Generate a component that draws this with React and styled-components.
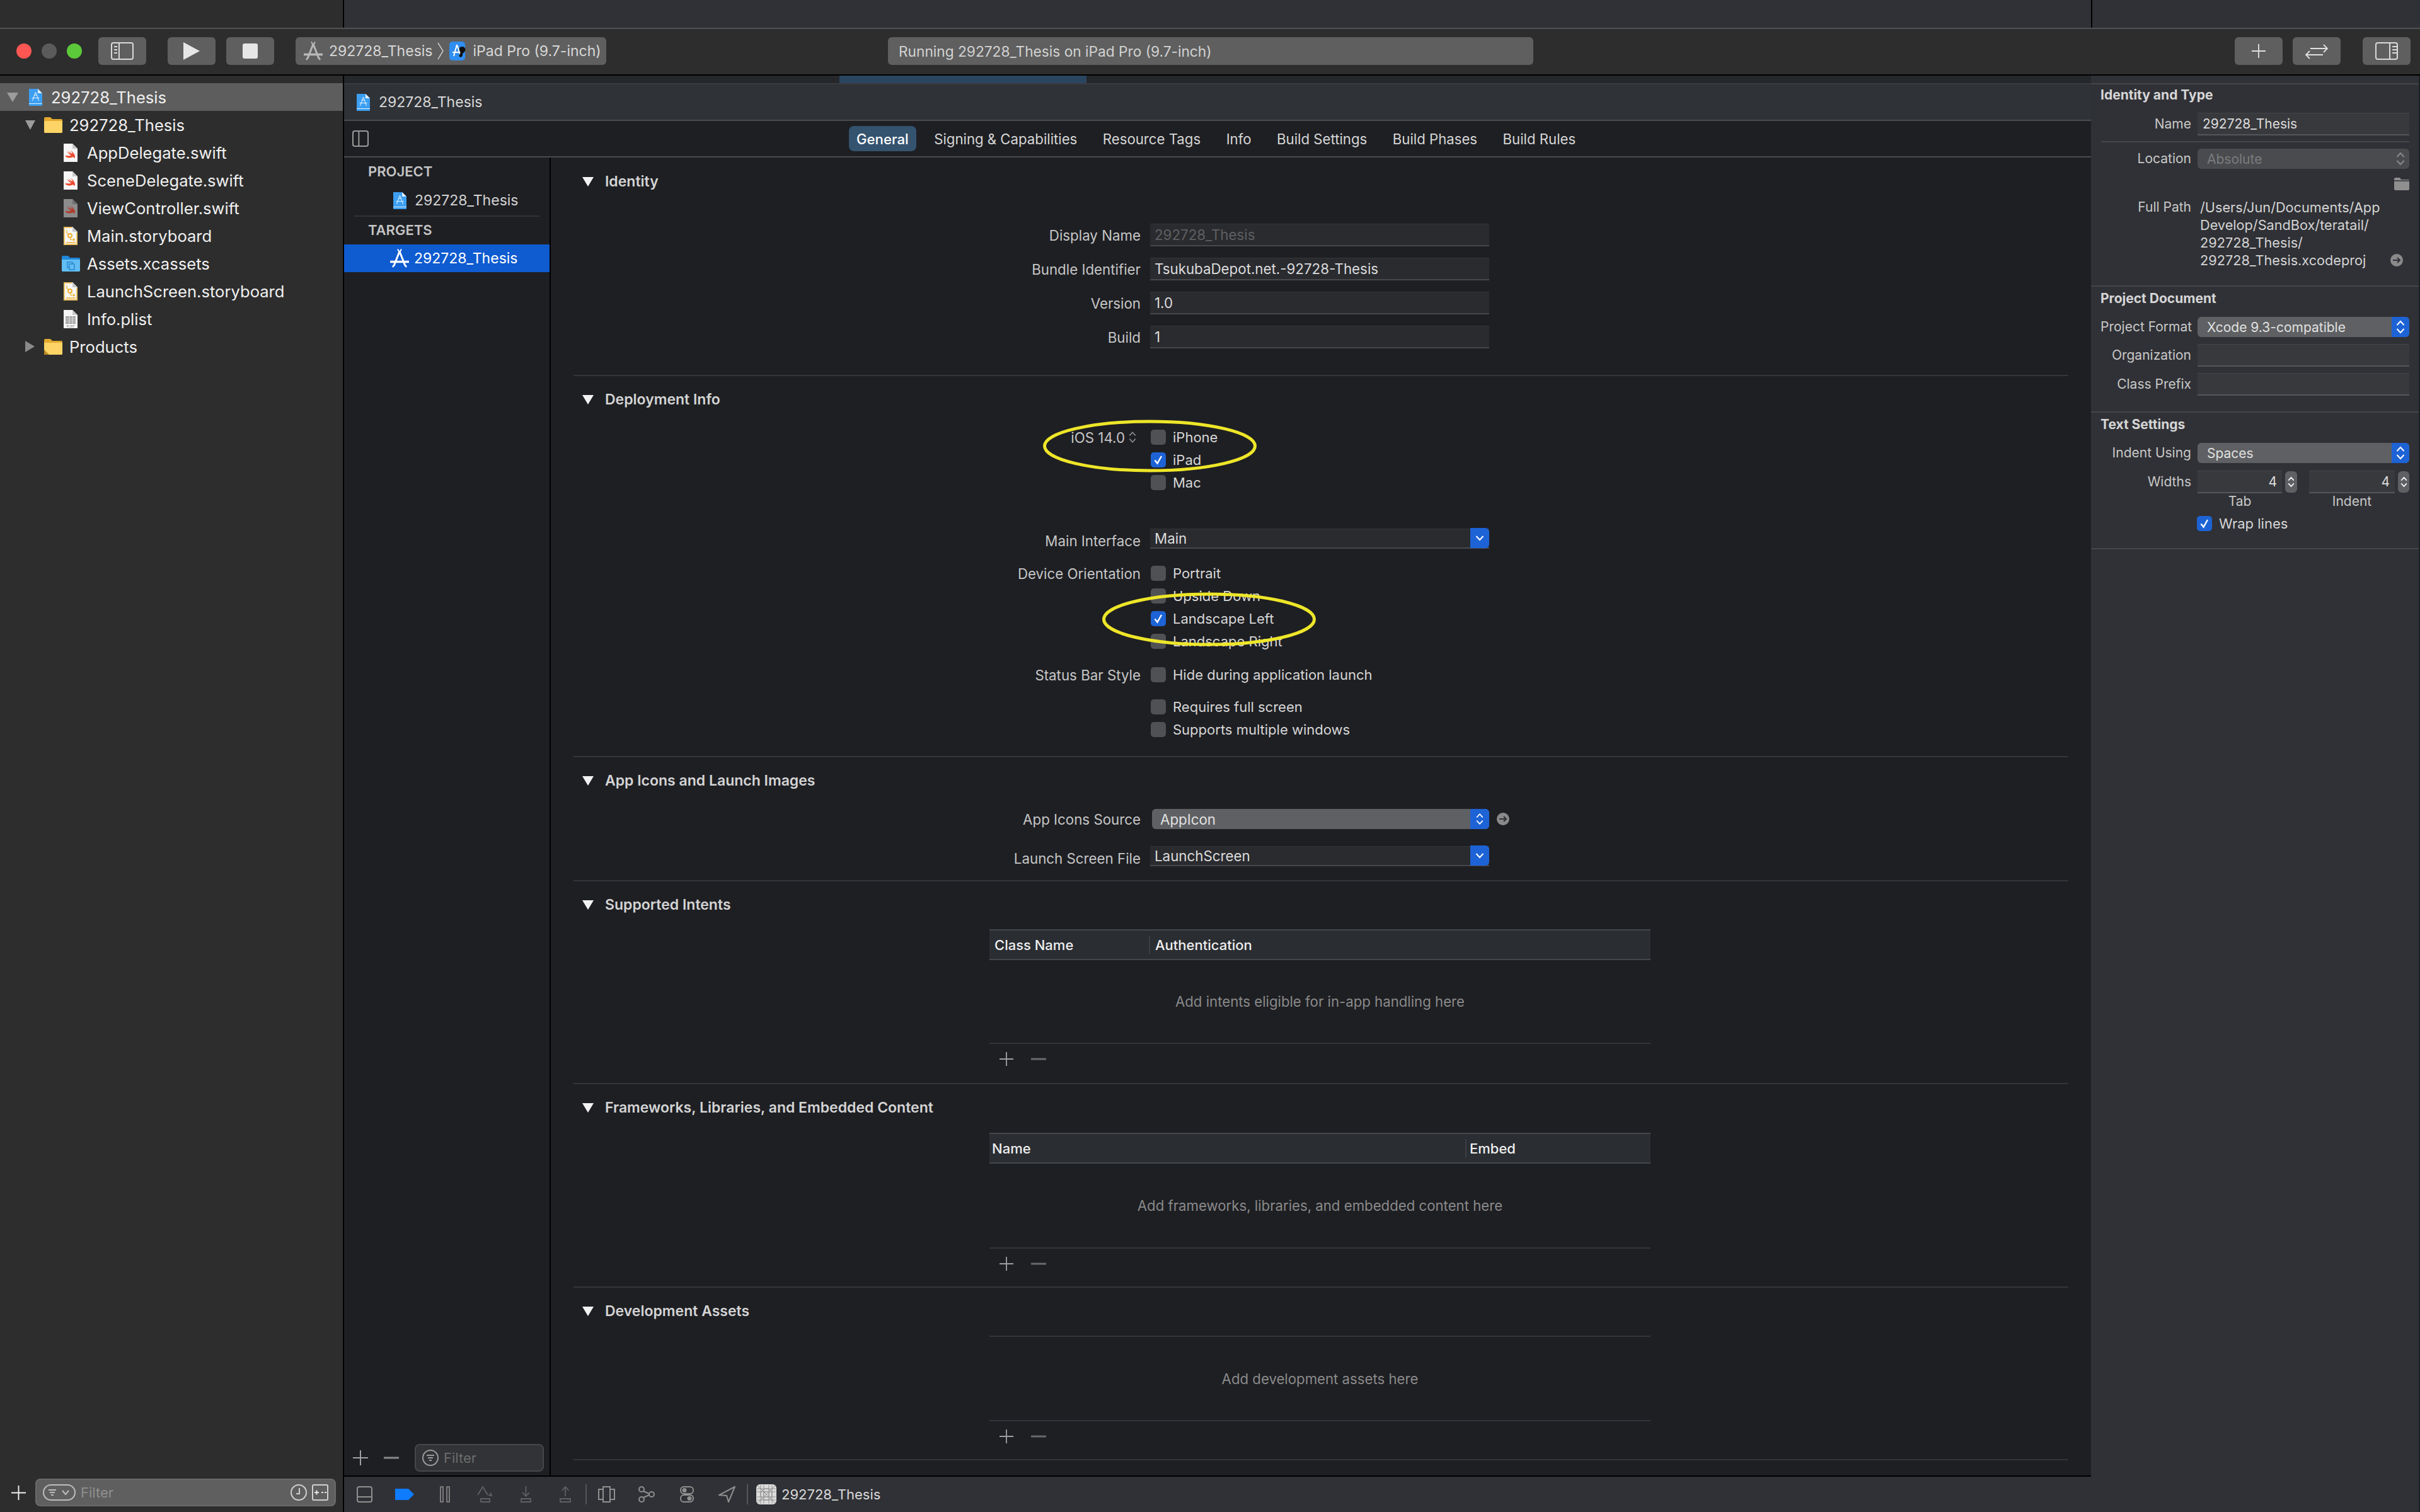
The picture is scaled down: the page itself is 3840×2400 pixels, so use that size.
import React from "react";
import styled, { createGlobalStyle } from "styled-components";

const GlobalStyle = createGlobalStyle`
  html, body {
    margin: 0;
    padding: 0;
    background: #1e1f23;
  }
  * {
    box-sizing: border-box;
  }
`;

const Window = styled.div`
  width: 3840px;
  height: 2400px;
  display: flex;
  flex-direction: column;
  overflow: hidden;
  font-family: Inter, "Liberation Sans", sans-serif;
  color: #dcdcdc;
  font-size: 22.3px;
`;

/* top strip + toolbar */
const TopStrip = styled.div`
  height: 46px;
  display: flex;
  background: #303136;
  border-bottom: 2px solid #515256;
`;

const StripLeft = styled.div`
  width: 546px;
  background: #2d2d2d;
  border-right: 2px solid #000;
`;

const StripRight = styled.div`
  margin-left: auto;
  width: 522px;
  border-left: 2px solid #000;
`;

const Toolbar = styled.div`
  height: 74px;
  display: flex;
  align-items: center;
  padding: 0 15px 2px 26px;
  background: #2d2d2d;
  border-bottom: 2px solid #000;
`;

const Lights = styled.div`
  display: flex;
  gap: 16px;
`;

const Light = styled.span`
  width: 24px;
  height: 24px;
  border-radius: 50%;
  background: ${(p) => p.$color};
`;

const ToolButton = styled.div`
  width: ${(p) => p.$w || 76}px;
  height: 44px;
  margin-left: ${(p) => p.$ml || 0}px;
  display: flex;
  align-items: center;
  justify-content: center;
  background: #5f5f5f;
  border-radius: 6px;
  color: #e4e4e4;
`;

const Scheme = styled.div`
  width: 493px;
  height: 44px;
  margin-left: 34px;
  display: flex;
  align-items: center;
  padding-left: 12px;
  background: #5f5f5f;
  border-radius: 6px;
  font-size: 23px;
  color: #d8d8d8;
  white-space: nowrap;
`;

const SchemeName = styled.span`
  margin-left: 9px;
`;

const SchemeArrow = styled.svg`
  margin: 0 9px 0 8px;
  flex: none;
`;

const DeviceName = styled.span`
  margin-left: 9px;
`;

const Status = styled.div`
  width: 1024px;
  height: 44px;
  margin-left: 447px;
  display: flex;
  align-items: center;
  padding-left: 17px;
  background: #5f5f5f;
  border-radius: 6px;
  color: #d2d2d2;
  font-size: 22.7px;
`;

const ToolbarRight = styled.div`
  margin-left: auto;
  display: flex;
`;

/* main area */
const Main = styled.div`
  flex: 1;
  display: flex;
  min-height: 0;
`;

const Navigator = styled.aside`
  width: 546px;
  display: flex;
  flex-direction: column;
  padding-top: 12px;
  background: #2d2d2d;
  border-right: 2px solid #000;
`;

const NavRow = styled.div`
  height: 44px;
  display: flex;
  align-items: center;
  padding-left: ${(p) => p.$pad}px;
  background: ${(p) => (p.$selected ? "#5d5d5d" : "transparent")};
  color: #f0f0f0;
  font-size: 25.6px;
`;

const TriSlot = styled.span`
  width: ${(p) => p.$w}px;
  margin-right: ${(p) => p.$mr}px;
  display: flex;
`;

const IconSlot = styled.span`
  width: ${(p) => p.$w}px;
  margin-right: ${(p) => p.$mr}px;
  display: flex;
  justify-content: center;
`;

const TriDown = styled.span`
  width: 0;
  height: 0;
  border-left: ${(p) => p.$size || 9}px solid transparent;
  border-right: ${(p) => p.$size || 9}px solid transparent;
  border-top: 15px solid ${(p) => p.$color || "#9c9c9c"};
`;

const TriRight = styled.span`
  width: 0;
  height: 0;
  border-top: 9px solid transparent;
  border-bottom: 9px solid transparent;
  border-left: 15px solid #8a8a8a;
`;

const NavBottom = styled.div`
  margin-top: auto;
  height: 50px;
  margin-bottom: 6px;
  display: flex;
  align-items: center;
  padding-left: 18px;
  gap: 15px;
`;

const FilterBox = styled.div`
  width: ${(p) => p.$w}px;
  height: 44px;
  display: flex;
  align-items: center;
  padding: 0 10px;
  gap: 8px;
  background: ${(p) => p.$bg};
  border: 2px solid ${(p) => p.$line};
  border-radius: 8px;
  color: ${(p) => p.$color};
  font-size: 22px;
`;

const FilterEnd = styled.div`
  margin-left: auto;
  display: flex;
  gap: 8px;
`;

const Center = styled.div`
  width: 2772px;
  display: flex;
  flex-direction: column;
`;

const Progress = styled.div`
  height: 14px;
  background: #25272b;
  border-bottom: 2px solid #3a3b40;
`;

const ProgressFill = styled.div`
  width: 392px;
  height: 12px;
  margin-left: 786px;
  background: #2a4560;
`;

const FileBar = styled.div`
  height: 58px;
  display: flex;
  align-items: center;
  gap: 13px;
  padding-left: 19px;
  background: #2f3237;
  border-bottom: 2px solid #4a4b4e;
  color: #d8d8d8;
  font-size: 23px;
`;

const TabBar = styled.div`
  height: 58px;
  display: flex;
  align-items: center;
  padding-left: 13px;
  background: #1e1f23;
  border-bottom: 2px solid #4a4b4e;
`;

const Tabs = styled.nav`
  display: flex;
  gap: 16.5px;
  margin-left: 762px;
`;

const Tab = styled.span`
  height: 40px;
  display: flex;
  align-items: center;
  padding: 0 12px;
  border-radius: 8px;
  background: ${(p) => (p.$active ? "#34536f" : "transparent")};
  color: ${(p) => (p.$active ? "#fff" : "#d6d6d6")};
  font-weight: ${(p) => (p.$active ? 500 : 400)};
  font-size: 22.2px;
  white-space: nowrap;
`;

const Body = styled.div`
  flex: 1;
  display: flex;
  min-height: 0;
`;

const Targets = styled.div`
  width: 328px;
  display: flex;
  flex-direction: column;
  background: #1e1f23;
  border-right: 2px solid #000;
  font-size: 23px;
`;

const GroupLabel = styled.div`
  height: 44px;
  padding: 0 0 ${(p) => p.$pb || 0}px 38px;
  display: flex;
  align-items: center;
  font-weight: 600;
  font-size: 22px;
  color: #c4c4c4;
`;

const TargetRow = styled.div`
  height: 44px;
  margin-top: ${(p) => p.$mt || 0}px;
  display: flex;
  align-items: center;
  padding-left: ${(p) => p.$pad}px;
  gap: ${(p) => p.$gap}px;
  background: ${(p) => (p.$selected ? "#0f5bd0" : "transparent")};
  color: ${(p) => (p.$selected ? "#fff" : "#d4d4d4")};
`;

const TargetRule = styled.div`
  height: 2px;
  margin: 2px 16px 0;
  background: #333438;
`;

const TargetBottom = styled.div`
  margin-top: auto;
  margin-bottom: 6px;
  display: flex;
  align-items: center;
  padding-left: 14px;
  gap: 25px;
`;

/* editor */
const Editor = styled.div`
  position: relative;
  width: 2444px;
  background: #1e1f23;
  overflow: hidden;
`;

const Section = styled.section`
  margin: 0 36px;
  padding: ${(p) => p.$pt || 15}px 0 ${(p) => p.$pb}px;
  border-bottom: 2px solid #34353a;
`;

const SectionHeader = styled.h3`
  height: 44px;
  margin: 0;
  display: flex;
  align-items: center;
  gap: 18px;
  padding-left: 14px;
  font-size: 23px;
  font-weight: 600;
  color: #d4d4d4;
`;

const FormBlock = styled.div`
  margin-top: 36px;
`;

const Row = styled.div`
  height: ${(p) => p.$h || 36}px;
  margin-top: ${(p) => p.$mt || 0}px;
  display: grid;
  grid-template-columns: 900px 538px;
  column-gap: 15px;
  align-items: center;
`;

const Label = styled.label`
  display: flex;
  align-items: center;
  justify-content: flex-end;
  gap: 6px;
  padding-right: ${(p) => p.$pr || 0}px;
  margin-top: ${(p) => p.$mt || 0}px;
  color: #c6c6c6;
`;

const Field = styled.div`
  height: 36px;
  display: flex;
  align-items: center;
  padding-left: 7px;
  background: #2a2b2f;
  border-top: 1px solid #333438;
  border-bottom: 2px solid #47484c;
  color: ${(p) => (p.$dim ? "#5e5f62" : "#dcdcdc")};
`;

const Combo = styled.div`
  height: 32px;
  display: flex;
  align-items: center;
  justify-content: space-between;
  padding-left: 7px;
  margin-top: -1px;
  background: #2a2b2f;
  border-top: 1px solid #333438;
  border-bottom: 2px solid #47484c;
  color: #dcdcdc;
`;

const Check = styled.label`
  display: flex;
  align-items: center;
  gap: 11px;
  margin-left: ${(p) => p.$ml ?? 1}px;
  color: #d6d6d6;
  font-size: 22px;
`;

const Box = styled.span`
  width: 24px;
  height: 24px;
  display: flex;
  align-items: center;
  justify-content: center;
  border-radius: 5px;
  background: ${(p) => (p.$on ? "#1d63d6" : "#505154")};
`;

const BlueEnd = styled.span`
  width: ${(p) => p.$w || 30}px;
  height: 32px;
  flex: none;
  display: flex;
  align-items: center;
  justify-content: center;
  background: #1d63d6;
  border-radius: 0 6px 6px 0;
  margin-bottom: ${(p) => p.$mb || 0}px;
`;

const GhostEnd = styled.span`
  width: 28px;
  display: flex;
  justify-content: center;
`;

const PopupRow = styled.div`
  display: flex;
  align-items: center;
  gap: 12px;
`;

const Popup = styled.div`
  height: 32px;
  width: ${(p) => p.$w || "100%"};
  flex: none;
  margin-left: ${(p) => p.$ml || 0}px;
  display: flex;
  align-items: center;
  justify-content: space-between;
  padding-left: ${(p) => p.$pad || 13}px;
  background: ${(p) => (p.$off ? "#4a4b4e" : "#5f6063")};
  border-radius: 6px;
  color: ${(p) => (p.$off ? "#7b7c7e" : "#e0e0e0")};
`;

const GoButton = styled.span`
  width: 20px;
  height: 20px;
  flex: none;
  margin-left: ${(p) => p.$ml || "auto"};
  margin-right: ${(p) => p.$mr || 0}px;
  display: flex;
  align-items: center;
  justify-content: center;
  border-radius: 50%;
  background: #8a8a8a;
`;

const Table = styled.div`
  width: 1049px;
  margin: ${(p) => p.$mt}px 0 0 660px;
`;

const TableHead = styled.div`
  height: 49px;
  display: grid;
  grid-template-columns: ${(p) => p.$first}px 1fr;
  align-items: center;
  background: #2a2d32;
  border-top: 2px solid #45474b;
  border-bottom: 2px solid #45474b;
  color: #eee;
  font-size: 22px;
  font-weight: 500;
`;

const HeadCell = styled.div`
  height: 30px;
  display: flex;
  align-items: center;
  padding-left: ${(p) => p.$pad}px;
  border-left: ${(p) => (p.$divider ? "2px solid #3c3e42" : "0")};
`;

const EmptyHint = styled.div`
  height: ${(p) => p.$h || 131}px;
  display: flex;
  align-items: center;
  justify-content: center;
  color: #8a8a8a;
  font-size: 22.2px;
`;

const TableRule = styled.div`
  height: 2px;
  background: #34353a;
`;

const TableFoot = styled.div`
  height: 48px;
  display: flex;
  align-items: center;
  gap: 28px;
  padding-left: 16px;
`;

const Annotation = styled.svg`
  position: absolute;
  left: ${(p) => p.$left}px;
  top: ${(p) => p.$top}px;
`;

/* debug bar */
const DebugBar = styled.div`
  height: 58px;
  display: flex;
  align-items: center;
  padding: 0 0 0 20px;
  background: #303136;
  border-top: 2px solid #000;
  color: #d8d8d8;
`;

const DebugIcon = styled.svg`
  margin-left: ${(p) => p.$ml || 0}px;
  flex: none;
`;

const DebugSep = styled.span`
  width: 2px;
  height: 32px;
  margin-left: ${(p) => p.$ml}px;
  background: #55565a;
`;

const DebugName = styled.span`
  margin-left: 8px;
  font-size: 22px;
`;

/* inspector */
const Inspector = styled.aside`
  width: 520px;
  padding-top: 12px;
  background: #303136;
  font-size: 21px;
  color: #d4d4d4;
`;

const InspSection = styled.section`
  padding: ${(p) => (p.$first ? 1 : 3)}px 15px ${(p) => p.$pb}px 15px;
  border-top: ${(p) => (p.$first ? "2px solid #45464b" : "0")};
  border-bottom: 2px solid #45464b;
`;

const InspTitle = styled.h4`
  height: 30px;
  margin: 0;
  display: flex;
  align-items: center;
  font-size: 21px;
  font-weight: 700;
  color: #d6d6d6;
`;

const InspRow = styled.div`
  min-height: ${(p) => p.$h || 32}px;
  margin-top: ${(p) => p.$mt || 0}px;
  display: grid;
  grid-template-columns: 144px 336px;
  column-gap: 10px;
  align-items: ${(p) => p.$align || "center"};
`;

const InspLabel = styled.label`
  text-align: right;
  color: #c8c8c8;
  line-height: 28px;
  white-space: nowrap;
`;

const InspField = styled.div`
  height: ${(p) => p.$h || 36}px;
  width: ${(p) => p.$w || "100%"};
  flex: none;
  display: flex;
  align-items: center;
  justify-content: ${(p) => (p.$right ? "flex-end" : "flex-start")};
  padding: 0 8px;
  background: #38393d;
  border-top: 1px solid #45464a;
  border-bottom: 2px solid #55565a;
  color: #dcdcdc;
`;

const InspRule = styled.div`
  height: 2px;
  margin: 9px 0 0 1px;
  background: #45464b;
`;

const FolderRow = styled.div`
  height: 20px;
  margin-top: 14px;
  display: flex;
  justify-content: flex-end;
`;

const PathBlock = styled.div`
  padding-left: 4px;
  font-size: 21.7px;
`;

const PathLine = styled.div`
  height: 28px;
  display: flex;
  align-items: center;
  white-space: nowrap;
`;

const WidthsGrid = styled.div`
  display: flex;
  gap: 19px;
`;

const WidthGroup = styled.div`
  display: flex;
  align-items: center;
  gap: 5px;
`;

const Stepper = styled.span`
  width: ${(p) => p.$w}px;
  height: 34px;
  flex: none;
  display: flex;
  align-items: center;
  justify-content: center;
  border-radius: 6px;
  background: #5f6063;
`;

const WidthLabels = styled.div`
  display: grid;
  grid-template-columns: 134px 136px;
  column-gap: 43px;
  margin-left: 154px;
  height: 20px;
  text-align: center;
  align-items: center;
  color: #c8c8c8;
`;

const WrapRow = styled.div`
  margin: 15px 0 0 153px;
`;

const SvgBlock = styled.svg`
  display: block;
  flex: none;
`;

/* drawn icons */
const XcodeDoc = () => (
  <SvgBlock width="23" height="29" viewBox="0 0 23 29">
    <path d="M1 1h14l7 7v20H1z" fill="#3c9ff2" />
    <path d="M15 1l7 7h-7z" fill="#e2f1ff" />
    <path d="M1 24h21v1H1z" fill="#dff0ff" />
    <path d="M11.5 6L6.5 20M11.5 6l5 14M5.5 15.5h12M9 11h5" stroke="#e6f4ff" strokeWidth="1" fill="none" />
  </SvgBlock>
);

const Folder = ({ back = "#e3a92f", front = "#fdd465", corner, children }) => (
  <SvgBlock width="29" height="26" viewBox="0 0 29 26">
    <path d="M0 3a2 2 0 012-2h8l3 3h14a2 2 0 012 2v18a2 2 0 01-2 2H2a2 2 0 01-2-2z" fill={back} />
    <path d="M0 7h29v17a2 2 0 01-2 2H2a2 2 0 01-2-2z" fill={front} />
    {corner && <path d="M0 18l8 8H2a2 2 0 01-2-2z" fill="#b98a22" />}
    {children}
  </SvgBlock>
);

const AssetsFolder = () => (
  <Folder back="#1f86d8" front="#62bdf3">
    <rect x="9" y="11" width="8" height="9" fill="none" stroke="#2a86cf" strokeWidth="1.4" />
    <rect x="12" y="14" width="8" height="9" fill="#62bdf3" stroke="#2a86cf" strokeWidth="1.4" />
  </Folder>
);

const SwiftDoc = ({ paper = "#f6f6f6", fold = "#c9c9c9", bird = "#ec4a32" }) => (
  <SvgBlock width="22" height="29" viewBox="0 0 22 29">
    <path d="M0 0h14l8 8v21H0z" fill={paper} />
    <path d="M14 0l8 8h-8z" fill={fold} />
    <path
      d="M3 20.5c3.500 2.500 8 2.800 11 .8 1.500.2 2.800 1 3.600 2 .8-2.500.2-4.800-1-6.800-1-2-3-4.200-5.600-6 1.600 1.900 2.800 4 3.200 5.800-2.500-1.500-5-3.500-7-5.600 1.300 2 3 3.900 4.800 5.500-2.500-1.100-5-2.700-7-4.300 1.900 2.900 4.400 5.300 7 6.800-2.900 1-6 .8-9-.2z"
      fill={bird}
    />
  </SvgBlock>
);

const StoryboardDoc = () => (
  <SvgBlock width="22" height="29" viewBox="0 0 22 29">
    <path d="M0 0h14l8 8v21H0z" fill="#f6f6f6" />
    <path d="M14 0l8 8h-8z" fill="#c9c9c9" />
    <path d="M1 28V1h12.500M21 8.500V28H1M4 25h15" fill="none" stroke="#eeb12c" strokeWidth="1.4" />
    <circle cx="10" cy="14" r="3" fill="none" stroke="#eeb12c" strokeWidth="2" />
    <path d="M5 5v5l3 2M11 17.500v3h6M15 18.500l2.500 2-2.500 2" fill="none" stroke="#eeb12c" strokeWidth="1.200" />
  </SvgBlock>
);

const PlistDoc = () => (
  <SvgBlock width="22" height="29" viewBox="0 0 22 29">
    <path d="M0 0h14l8 8v21H0z" fill="#f6f6f6" />
    <path d="M14 0l8 8h-8z" fill="#c9c9c9" />
    <path d="M3 10h16v12H3z" fill="#9b9b9b" />
    <path d="M3 13h16M3 16h16M3 19h16M9 10v12M14 10v12" stroke="#f0f0f0" strokeWidth="0.8" />
    <text x="11" y="27.500" fontSize="4.500" textAnchor="middle" fill="#777" fontFamily="Inter, sans-serif">
      PLIST
    </text>
  </SvgBlock>
);

const AppGlyph = ({ size = 32, color = "#fff" }) => (
  <SvgBlock width={size} height={size} viewBox="0 0 32 32">
    <path d="M13 1.500l3 5 3-5" fill="none" stroke={color} strokeWidth="2" />
    <path d="M16 5L7 28M16 5l9 23" fill="none" stroke={color} strokeWidth="3" />
    <path d="M1 21.500h30" stroke={color} strokeWidth="3.500" />
    <path d="M5 30l2-3M27 30l-2-3" stroke={color} strokeWidth="2.500" />
  </SvgBlock>
);

const DeviceIcon = () => (
  <SvgBlock width="28" height="30" viewBox="0 0 28 30">
    <rect x="0" y="0" width="25" height="30" rx="5" fill="#2f8ef0" />
    <path d="M12 5L7 23M12 5l6 18M5 17h15" stroke="#fff" strokeWidth="2" fill="none" />
    <path d="M17 9c5-3 10 1 8 6-1 2-4 3-4 6 0 3-3 5-5 3-2-3 3-5 1-8-1-2-2-5 0-7z" fill="#101010" />
  </SvgBlock>
);

const GridIcon = () => (
  <DebugIcon width="32" height="32" viewBox="0 0 32 32" $ml={13}>
    <rect width="32" height="32" rx="6" fill="#dcdcdc" />
    <path
      d="M1 7h30M1 12h30M1 20h30M1 25h30M7 1v30M12 1v30M20 1v30M25 1v30M2 2l28 28M30 2L2 30"
      stroke="#8a8a8a"
      strokeWidth="0.9"
    />
    <circle cx="16" cy="16" r="9" fill="none" stroke="#8a8a8a" strokeWidth="0.9" />
    <circle cx="16" cy="16" r="4.500" fill="none" stroke="#8a8a8a" strokeWidth="0.9" />
  </DebugIcon>
);

const SidebarIcon = ({ w = 26, h = 26, split = 0.36, lines, right, stroke = "#9a9a9a" }) => {
  const x = right ? w * (1 - split) : w * split;
  return (
    <SvgBlock width={w} height={h} viewBox={`0 0 ${w} ${h}`}>
      <rect x="1" y="1" width={w - 2} height={h - 2} rx="3" fill="none" stroke={stroke} strokeWidth="2" />
      <path d={`M${x} 1v${h - 2}`} stroke={stroke} strokeWidth="2" />
      {lines && (
        <path
          d={right ? `M${x + 4} 7h7M${x + 4} 12h7M${x + 4} 17h7` : "M5 7h5M5 12h5M5 17h5"}
          stroke={stroke}
          strokeWidth="2"
        />
      )}
    </SvgBlock>
  );
};

const Plus = ({ size = 24, color = "#a0a0a0", width = 2 }) => (
  <SvgBlock width={size} height={size} viewBox="0 0 24 24">
    <path d="M12 0v24M0 12h24" stroke={color} strokeWidth={width} />
  </SvgBlock>
);

const Minus = ({ color = "#6a6a6a" }) => (
  <SvgBlock width="24" height="24" viewBox="0 0 24 24">
    <path d="M0 12h24" stroke={color} strokeWidth="3" />
  </SvgBlock>
);

const UpDown = ({ color = "#fff", w = 14, h = 22 }) => (
  <SvgBlock width={w} height={h} viewBox="0 0 14 22">
    <path d="M1.500 8L7 2l5.500 6M1.500 14L7 20l5.500-6" fill="none" stroke={color} strokeWidth="2" />
  </SvgBlock>
);

const ChevronDown = () => (
  <SvgBlock width="14" height="10" viewBox="0 0 14 10">
    <path d="M1.500 2L7 8l5.500-6" fill="none" stroke="#fff" strokeWidth="2" />
  </SvgBlock>
);

const Tick = () => (
  <SvgBlock width="16" height="16" viewBox="0 0 16 16">
    <path d="M2.500 8.500l4 5L13 2" fill="none" stroke="#fff" strokeWidth="2.400" />
  </SvgBlock>
);

const GoArrow = () => (
  <SvgBlock width="14" height="12" viewBox="0 0 14 12">
    <path d="M1 6h11M8 2l4 4-4 4" fill="none" stroke="#303136" strokeWidth="2" />
  </SvgBlock>
);

const FilterLines = ({ color, r }) => (
  <SvgBlock width={r * 2} height={r * 2} viewBox="0 0 26 26">
    <circle cx="13" cy="13" r="12" fill="none" stroke={color} strokeWidth="2" />
    <path d="M7 9h12M9 13h8M11 17h4" stroke={color} strokeWidth="2" />
  </SvgBlock>
);

const FilterPill = () => (
  <SvgBlock width="52" height="26" viewBox="0 0 52 26">
    <rect x="1" y="1" width="50" height="24" rx="12" fill="none" stroke="#bdbdbd" strokeWidth="2" />
    <path d="M9 9h12M11 13h8M13 17h4" stroke="#bdbdbd" strokeWidth="2" />
    <path d="M31 10l5 6 5-6" fill="none" stroke="#bdbdbd" strokeWidth="2" />
  </SvgBlock>
);

const ClockIcon = () => (
  <SvgBlock width="26" height="26" viewBox="0 0 26 26">
    <circle cx="13" cy="13" r="12" fill="none" stroke="#d0d0d0" strokeWidth="2" />
    <path d="M14 6v9H9" fill="none" stroke="#d0d0d0" strokeWidth="2" />
  </SvgBlock>
);

const DiffIcon = () => (
  <SvgBlock width="26" height="26" viewBox="0 0 26 26">
    <rect x="1" y="1" width="24" height="24" rx="2" fill="none" stroke="#d0d0d0" strokeWidth="2" />
    <path d="M4 13h7M7.500 9.500v7M15 13h3M20 13h3" stroke="#e4e4e4" strokeWidth="2" />
  </SvgBlock>
);

const navItems = [
  { name: "292728_Thesis", icon: <XcodeDoc />, level: 0, tri: "down", selected: true },
  { name: "292728_Thesis", icon: <Folder />, level: 1, tri: "down" },
  { name: "AppDelegate.swift", icon: <SwiftDoc />, level: 2 },
  { name: "SceneDelegate.swift", icon: <SwiftDoc />, level: 2 },
  { name: "ViewController.swift", icon: <SwiftDoc paper="#8c8c8c" fold="#6e6e6e" bird="#b23a2a" />, level: 2 },
  { name: "Main.storyboard", icon: <StoryboardDoc />, level: 2 },
  { name: "Assets.xcassets", icon: <AssetsFolder />, level: 2 },
  { name: "LaunchScreen.storyboard", icon: <StoryboardDoc />, level: 2 },
  { name: "Info.plist", icon: <PlistDoc />, level: 2 },
  { name: "Products", icon: <Folder corner />, level: 1, tri: "right" },
];

const levels = [
  { pad: 11, triW: 18, triMr: 16, iconW: 23, iconMr: 13 },
  { pad: 40, triW: 16, triMr: 14, iconW: 29, iconMr: 11 },
  { pad: 98, triW: 0, triMr: 0, iconW: 28, iconMr: 12 },
];

const tabs = [
  "General",
  "Signing & Capabilities",
  "Resource Tags",
  "Info",
  "Build Settings",
  "Build Phases",
  "Build Rules",
];

const NavTree = () => (
  <>
    {navItems.map((item, i) => {
      const lv = levels[item.level];
      return (
        <NavRow key={i} $pad={lv.pad} $selected={item.selected}>
          {item.level < 2 && (
            <TriSlot $w={lv.triW} $mr={lv.triMr}>
              {item.tri === "down" ? <TriDown $size={lv.triW / 2} /> : <TriRight />}
            </TriSlot>
          )}
          <IconSlot $w={lv.iconW} $mr={lv.iconMr}>
            {item.icon}
          </IconSlot>
          {item.name}
        </NavRow>
      );
    })}
  </>
);

const CheckItem = ({ on, children }) => (
  <Check>
    <Box $on={on}>{on && <Tick />}</Box>
    {children}
  </Check>
);

const TextRow = ({ label, value, dim }) => (
  <Row $h={54}>
    <Label>{label}</Label>
    <Field $dim={dim}>{value}</Field>
  </Row>
);

const TableControls = () => (
  <TableFoot>
    <Plus size={22} />
    <Minus />
  </TableFoot>
);

const App = () => (
  <Window>
    <GlobalStyle />
    <TopStrip>
      <StripLeft />
      <StripRight />
    </TopStrip>

    <Toolbar>
      <Lights>
        <Light $color="#fc5753" />
        <Light $color="#5b5b5b" />
        <Light $color="#5cc93b" />
      </Lights>
      <ToolButton $ml={26}>
        <SidebarIcon w={36} h={28} lines stroke="#dadada" />
      </ToolButton>
      <ToolButton $ml={34}>
        <SvgBlock width="26" height="28" viewBox="0 0 26 28">
          <path d="M0 0l26 14L0 28z" fill="#e6e6e6" />
        </SvgBlock>
      </ToolButton>
      <ToolButton $ml={17}>
        <SvgBlock width="24" height="24" viewBox="0 0 24 24">
          <rect width="24" height="24" rx="3" fill="#e6e6e6" />
        </SvgBlock>
      </ToolButton>
      <Scheme>
        <AppGlyph color="#b8b8b8" />
        <SchemeName>292728_Thesis</SchemeName>
        <SchemeArrow width="10" height="28" viewBox="0 0 10 28">
          <path d="M1 1l8 13-8 13" fill="none" stroke="#c8c8c8" strokeWidth="1.500" />
        </SchemeArrow>
        <DeviceIcon />
        <DeviceName>iPad Pro (9.7-inch)</DeviceName>
      </Scheme>
      <Status>Running 292728_Thesis on iPad Pro (9.7-inch)</Status>
      <ToolbarRight>
        <ToolButton>
          <Plus size={22} color="#e0e0e0" />
        </ToolButton>
        <ToolButton $ml={16}>
          <SvgBlock width="36" height="26" viewBox="0 0 36 26">
            <path d="M8 9h27M29 3l6 6-6 6M1 19h27M7 13l-6 6 6 6" fill="none" stroke="#e0e0e0" strokeWidth="1.800" />
          </SvgBlock>
        </ToolButton>
        <ToolButton $ml={35}>
          <SidebarIcon w={36} h={28} lines right stroke="#dadada" />
        </ToolButton>
      </ToolbarRight>
    </Toolbar>

    <Main>
      <Navigator>
        <NavTree />
        <NavBottom>
          <Plus size={23} color="#f0f0f0" />
          <FilterBox $w={477} $bg="#5f5f5f" $line="#6a6a6a" $color="#8f8f8f">
            <FilterPill />
            Filter
            <FilterEnd>
              <ClockIcon />
              <DiffIcon />
            </FilterEnd>
          </FilterBox>
        </NavBottom>
      </Navigator>

      <Center>
        <Progress>
          <ProgressFill />
        </Progress>
        <FileBar>
          <XcodeDoc />
          292728_Thesis
        </FileBar>
        <TabBar>
          <SidebarIcon w={26} h={26} split={0.4} />
          <Tabs>
            {tabs.map((t, i) => (
              <Tab key={t} $active={i === 0}>
                {t}
              </Tab>
            ))}
          </Tabs>
        </TabBar>

        <Body>
          <Targets>
            <GroupLabel>PROJECT</GroupLabel>
            <TargetRow $mt={2} $pad={77} $gap={12}>
              <XcodeDoc />
              292728_Thesis
            </TargetRow>
            <TargetRule />
            <GroupLabel $pb={2}>TARGETS</GroupLabel>
            <TargetRow $selected $pad={72} $gap={7}>
              <AppGlyph />
              292728_Thesis
            </TargetRow>
            <TargetBottom>
              <Plus />
              <Minus color="#8a8a8a" />
              <FilterBox $w={205} $bg="#323336" $line="#46474a" $color="#6c6c6c">
                <FilterLines color="#9a9a9a" r={13} />
                Filter
              </FilterBox>
            </TargetBottom>
          </Targets>

          <Editor>
            <Section $pt={16} $pb={33}>
              <SectionHeader>
                <TriDown $color="#f2f2f2" />
                Identity
              </SectionHeader>
              <FormBlock>
                <TextRow label="Display Name" value="292728_Thesis" dim />
                <TextRow label="Bundle Identifier" value="TsukubaDepot.net.-92728-Thesis" />
                <TextRow label="Version" value="1.0" />
                <TextRow label="Build" value="1" />
              </FormBlock>
            </Section>

            <Section $pb={24}>
              <SectionHeader>
                <TriDown $color="#f2f2f2" />
                Deployment Info
              </SectionHeader>
              <Row $mt={20}>
                <Label $pr={7}>
                  iOS 14.0
                  <UpDown color="#8a8a8a" w={12} h={20} />
                </Label>
                <CheckItem>iPhone</CheckItem>
              </Row>
              <Row>
                <span />
                <CheckItem on>iPad</CheckItem>
              </Row>
              <Row>
                <span />
                <CheckItem>Mac</CheckItem>
              </Row>
              <Row $h={44} $mt={49}>
                <Label $mt={6}>Main Interface</Label>
                <Combo>
                  Main
                  <BlueEnd $mb={1}>
                    <ChevronDown />
                  </BlueEnd>
                </Combo>
              </Row>
              <Row $mt={15}>
                <Label>Device Orientation</Label>
                <CheckItem>Portrait</CheckItem>
              </Row>
              <Row>
                <span />
                <CheckItem>Upside Down</CheckItem>
              </Row>
              <Row>
                <span />
                <CheckItem on>Landscape Left</CheckItem>
              </Row>
              <Row>
                <span />
                <CheckItem>Landscape Right</CheckItem>
              </Row>
              <Row $mt={17}>
                <Label>Status Bar Style</Label>
                <CheckItem>Hide during application launch</CheckItem>
              </Row>
              <Row $mt={15}>
                <span />
                <CheckItem>Requires full screen</CheckItem>
              </Row>
              <Row>
                <span />
                <CheckItem>Supports multiple windows</CheckItem>
              </Row>
            </Section>

            <Section $pb={16}>
              <SectionHeader>
                <TriDown $color="#f2f2f2" />
                App Icons and Launch Images
              </SectionHeader>
              <Row $h={44} $mt={17}>
                <Label>App Icons Source</Label>
                <PopupRow>
                  <Popup $w="535px" $ml={3}>
                    AppIcon
                    <BlueEnd>
                      <UpDown w={12} h={20} />
                    </BlueEnd>
                  </Popup>
                  <GoButton $ml="0">
                    <GoArrow />
                  </GoButton>
                </PopupRow>
              </Row>
              <Row $h={44} $mt={15}>
                <Label $mt={6}>Launch Screen File</Label>
                <Combo>
                  LaunchScreen
                  <BlueEnd $mb={1}>
                    <ChevronDown />
                  </BlueEnd>
                </Combo>
              </Row>
            </Section>

            <Section $pb={14}>
              <SectionHeader>
                <TriDown $color="#f2f2f2" />
                Supported Intents
              </SectionHeader>
              <Table $mt={17}>
                <TableHead $first={253}>
                  <HeadCell $pad={8}>Class Name</HeadCell>
                  <HeadCell $pad={8} $divider>
                    Authentication
                  </HeadCell>
                </TableHead>
                <EmptyHint>Add intents eligible for in-app handling here</EmptyHint>
                <TableRule />
                <TableControls />
              </Table>
            </Section>

            <Section $pb={12}>
              <SectionHeader>
                <TriDown $color="#f2f2f2" />
                Frameworks, Libraries, and Embedded Content
              </SectionHeader>
              <Table $mt={18}>
                <TableHead $first={755}>
                  <HeadCell $pad={4}>Name</HeadCell>
                  <HeadCell $pad={5} $divider>
                    Embed
                  </HeadCell>
                </TableHead>
                <EmptyHint $h={133}>Add frameworks, libraries, and embedded content here</EmptyHint>
                <TableRule />
                <TableControls />
              </Table>
            </Section>

            <Section $pb={12}>
              <SectionHeader>
                <TriDown $color="#f2f2f2" />
                Development Assets
              </SectionHeader>
              <Table $mt={17}>
                <TableRule />
                <EmptyHint $h={132}>Add development assets here</EmptyHint>
                <TableRule />
                <TableControls />
              </Table>
            </Section>

            <Annotation $left={779} $top={415} width="343" height="86" viewBox="0 0 343 86">
              <ellipse cx="171.500" cy="43" rx="167" ry="39" fill="none" stroke="#eee629" strokeWidth="5" />
            </Annotation>
            <Annotation $left={873} $top={689} width="343" height="88" viewBox="0 0 343 88">
              <ellipse cx="171.500" cy="44" rx="167" ry="40" fill="none" stroke="#eee629" strokeWidth="5" />
            </Annotation>
          </Editor>
        </Body>

        <DebugBar>
          <DebugIcon width="25" height="26" viewBox="0 0 25 26">
            <rect x="1" y="1" width="23" height="24" rx="3" fill="none" stroke="#8f8f8f" strokeWidth="2" />
            <path d="M1 17h23" stroke="#8f8f8f" strokeWidth="2" />
          </DebugIcon>
          <DebugIcon width="30" height="18" viewBox="0 0 30 18" $ml={36}>
            <path d="M0 0h21l9 9-9 9H0z" fill="#0f7bff" />
          </DebugIcon>
          <DebugIcon width="16" height="26" viewBox="0 0 16 26" $ml={41}>
            <path d="M1 1h4v24H1zM11 1h4v24h-4z" fill="none" stroke="#8f8f8f" strokeWidth="1.600" />
          </DebugIcon>
          <DebugIcon width="26" height="26" viewBox="0 0 26 26" $ml={43}>
            <path d="M1 14L9 1l8 13M21 10l2 5-5-1M6 20h14v5H6z" fill="none" stroke="#5f6063" strokeWidth="1.800" />
          </DebugIcon>
          <DebugIcon width="17" height="26" viewBox="0 0 17 26" $ml={43}>
            <path d="M8.500 0v15M3 10l5.500 6L14 10M1 20h15v5H1z" fill="none" stroke="#5f6063" strokeWidth="1.800" />
          </DebugIcon>
          <DebugIcon width="18" height="26" viewBox="0 0 18 26" $ml={45}>
            <path d="M9 16V1M3.500 7L9 1l5.500 6M1 20h16v5H1z" fill="none" stroke="#5f6063" strokeWidth="1.800" />
          </DebugIcon>
          <DebugSep $ml={23} />
          <DebugIcon width="27" height="26" viewBox="0 0 27 26" $ml={18}>
            <path d="M8 1h11v24H8zM8 5H1v16h7M19 5h7v16h-7" fill="none" stroke="#8f8f8f" strokeWidth="2" />
          </DebugIcon>
          <DebugIcon width="26" height="26" viewBox="0 0 26 26" $ml={37}>
            <circle cx="5" cy="5" r="4" fill="none" stroke="#8f8f8f" strokeWidth="2" />
            <circle cx="5" cy="21" r="4" fill="none" stroke="#8f8f8f" strokeWidth="2" />
            <circle cx="21" cy="13" r="4" fill="none" stroke="#8f8f8f" strokeWidth="2" />
            <path d="M8 8l9 4M8 18l9-4" stroke="#8f8f8f" strokeWidth="2" />
          </DebugIcon>
          <DebugIcon width="22" height="26" viewBox="0 0 22 26" $ml={40}>
            <rect x="1" y="1" width="20" height="11" rx="5" fill="none" stroke="#8f8f8f" strokeWidth="2" />
            <rect x="1" y="14" width="20" height="11" rx="5" fill="none" stroke="#8f8f8f" strokeWidth="2" />
            <circle cx="7" cy="6.500" r="3.500" fill="#8f8f8f" />
            <circle cx="15" cy="19.500" r="3.500" fill="#8f8f8f" />
          </DebugIcon>
          <DebugIcon width="27" height="26" viewBox="0 0 27 26" $ml={39}>
            <path d="M26 1L1 14l12 1 3 10z" fill="none" stroke="#8f8f8f" strokeWidth="2" />
          </DebugIcon>
          <DebugSep $ml={18} />
          <GridIcon />
          <DebugName>292728_Thesis</DebugName>
        </DebugBar>
      </Center>

      <Inspector>
        <InspSection $first $pb={26}>
          <InspTitle>Identity and Type</InspTitle>
          <InspRow $h={36} $mt={14}>
            <InspLabel>Name</InspLabel>
            <InspField>292728_Thesis</InspField>
          </InspRow>
          <InspRule />
          <InspRow $mt={10}>
            <InspLabel>Location</InspLabel>
            <Popup $off $pad={15}>
              Absolute
              <GhostEnd>
                <UpDown color="#8a8a8a" w={14} h={22} />
              </GhostEnd>
            </Popup>
          </InspRow>
          <FolderRow>
            <SvgBlock width="24" height="20" viewBox="0 0 24 20">
              <path d="M0 2a2 2 0 012-2h7l2 3h11a2 2 0 012 2v13a2 2 0 01-2 2H2a2 2 0 01-2-2z" fill="#8f8f8f" />
              <path d="M0 5h24" stroke="#303136" strokeWidth="1.500" />
            </SvgBlock>
          </FolderRow>
          <InspRow $mt={13} $align="start">
            <InspLabel>Full Path</InspLabel>
            <PathBlock>
              <PathLine>/Users/Jun/Documents/App</PathLine>
              <PathLine>Develop/SandBox/teratail/</PathLine>
              <PathLine>292728_Thesis/</PathLine>
              <PathLine>
                292728_Thesis.xcodeproj
                <GoButton $mr={10}>
                  <GoArrow />
                </GoButton>
              </PathLine>
            </PathBlock>
          </InspRow>
        </InspSection>

        <InspSection $pb={25}>
          <InspTitle>Project Document</InspTitle>
          <InspRow $mt={15}>
            <InspLabel>Project Format</InspLabel>
            <Popup $pad={15}>
              Xcode 9.3-compatible
              <BlueEnd $w={28}>
                <UpDown w={14} h={22} />
              </BlueEnd>
            </Popup>
          </InspRow>
          <InspRow $h={36} $mt={11}>
            <InspLabel>Organization</InspLabel>
            <InspField />
          </InspRow>
          <InspRow $h={36} $mt={10}>
            <InspLabel>Class Prefix</InspLabel>
            <InspField />
          </InspRow>
        </InspSection>

        <InspSection $pb={26}>
          <InspTitle>Text Settings</InspTitle>
          <InspRow $mt={15}>
            <InspLabel>Indent Using</InspLabel>
            <Popup $pad={15}>
              Spaces
              <BlueEnd $w={28}>
                <UpDown w={14} h={22} />
              </BlueEnd>
            </Popup>
          </InspRow>
          <InspRow $h={36} $mt={12}>
            <InspLabel>Widths</InspLabel>
            <WidthsGrid>
              <WidthGroup>
                <InspField $right $w="134px">
                  4
                </InspField>
                <Stepper $w={19}>
                  <UpDown w={11} h={20} />
                </Stepper>
              </WidthGroup>
              <WidthGroup>
                <InspField $right $w="136px">
                  4
                </InspField>
                <Stepper $w={18}>
                  <UpDown w={11} h={20} />
                </Stepper>
              </WidthGroup>
            </WidthsGrid>
          </InspRow>
          <WidthLabels>
            <span>Tab</span>
            <span>Indent</span>
          </WidthLabels>
          <WrapRow>
            <Check $ml={0}>
              <Box $on>
                <Tick />
              </Box>
              Wrap lines
            </Check>
          </WrapRow>
        </InspSection>
      </Inspector>
    </Main>
  </Window>
);

export default App;
